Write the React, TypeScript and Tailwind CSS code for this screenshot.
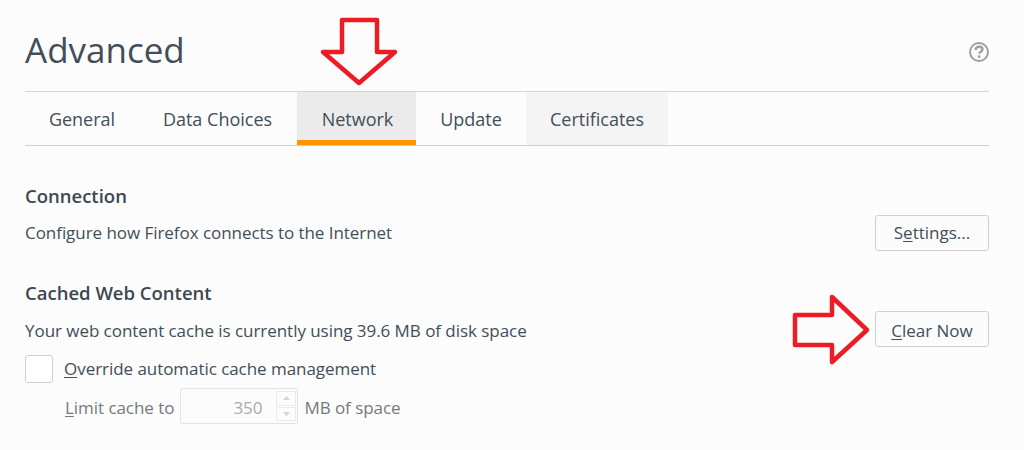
export default function App() {
  const tabs = [
    { label: "General", w: "w-[113px] pl-[1px]", cls: "" },
    { label: "Data Choices", w: "w-[159px]", cls: "" },
    { label: "Network", w: "w-[119px] pl-[2px]", cls: "bg-[#ebebeb] shadow-[inset_0_-5px_0_#ff9400]" },
    { label: "Update", w: "w-[110px]", cls: "" },
    { label: "Certificates", w: "w-[142px]", cls: "bg-[#f4f4f4]" },
  ];
  return (
    <div className="relative w-[1024px] h-[450px] overflow-hidden bg-[#fcfcfc] pl-[25px] pr-[35px] text-[#424e5a] font-['Open_Sans','Noto_Sans',sans-serif]">
      <div className="h-[92px] flex items-start justify-between border-b border-[#d5d5d5]">
        <h1 className="mt-[27px] text-[35px] leading-[46px] font-normal text-[#424e5a]">Advanced</h1>
        <svg className="mt-[42px]" width="20" height="20" viewBox="0 0 20 20">
          <circle cx="10" cy="10" r="9" fill="none" stroke="#a0a0a0" strokeWidth="2" />
          <path d="M6.6 8c0-2.1 1.4-3.3 3.5-3.3s3.4 1.2 3.4 2.8c0 2.3-3.2 2.2-3.2 4.3" fill="none" stroke="#a0a0a0" strokeWidth="2.4" />
          <rect x="8.9" y="13.4" width="2.5" height="2.5" fill="#a0a0a0" />
        </svg>
      </div>
      <div className="flex h-[54px] border-b border-[#cfcfcf]">
        {tabs.map((t) => (
          <div key={t.label} className={`${t.w} ${t.cls} flex items-center justify-center text-[18px] pt-[1px]`}>
            {t.label}
          </div>
        ))}
      </div>

      <section className="mt-[38px] flex items-start justify-between">
        <div>
          <h2 className="text-[18.5px] leading-[24px] font-semibold text-[#3c4752]">Connection</h2>
          <p className="mt-[13px] text-[17px] leading-[24px] tracking-[-0.05px]">Configure how Firefox connects to the Internet</p>
        </div>
        <button className="mt-[31px] w-[114px] h-[36px] rounded-[3px] border border-[#cfcfcf] bg-[#fbfbfb] text-[17px] text-[#424e5a]">
          S<span className="underline underline-offset-2">e</span>ttings...
        </button>
      </section>

      <section className="mt-[30px] flex items-start justify-between">
        <div>
          <h2 className="text-[18.5px] leading-[24px] font-semibold text-[#3c4752]">Cached Web Content</h2>
          <p className="mt-[14px] text-[17px] leading-[24px] tracking-[-0.05px]">Your web content cache is currently using 39.6 MB of disk space</p>
        </div>
        <button className="mt-[30px] w-[114px] h-[36px] pt-[3px] rounded-[3px] border border-[#cfcfcf] bg-[#fbfbfb] text-[17px] text-[#424e5a]">
          <span className="underline underline-offset-2">C</span>lear Now
        </button>
      </section>

      <div className="mt-[8px] flex items-center h-[28px]">
        <div className="w-[28px] h-[28px] rounded-[3px] border border-[#cfcfcf] bg-white" />
        <span className="ml-[11px] text-[17px] tracking-[-0.05px]">
          <span className="underline underline-offset-2">O</span>verride automatic cache management
        </span>
      </div>

      <div className="mt-[5px] ml-[40px] flex items-center h-[36px] text-[17px] tracking-[-0.05px] text-[#75797e]">
        <span className="pt-[4px]"><span className="underline underline-offset-2">L</span>imit cache to</span>
        <div className="ml-[6px] w-[118px] h-[36px] rounded-[2px] border border-[#e3e3e3] flex items-center justify-end">
          <span className="mr-[14px] pt-[4px] text-[#a9a9a9]">350</span>
          <div className="mr-[1px] w-[20px] h-[30px] flex flex-col gap-[1px]">
            <div className="flex-1 border border-[#ebebeb] flex items-center justify-center">
              <svg width="7" height="4" viewBox="0 0 7 4"><path d="M3.5 0L7 4H0z" fill="#d4d4d4" /></svg>
            </div>
            <div className="flex-1 border border-[#ebebeb] flex items-center justify-center">
              <svg width="7" height="4" viewBox="0 0 7 4"><path d="M0 0h7L3.5 4z" fill="#d4d4d4" /></svg>
            </div>
          </div>
        </div>
        <span className="ml-[6px] pt-[4px]">MB of space</span>
      </div>

      <svg className="absolute left-0 top-0 pointer-events-none" width="1024" height="450" viewBox="0 0 1024 450">
        <path d="M342 20H377V52H395L359 83L323 52H342Z" fill="none" stroke="#ed1c24" strokeWidth="4.5" strokeLinejoin="round" />
        <path d="M795 315H832V297L867 330L832 362V345H795Z" fill="none" stroke="#ed1c24" strokeWidth="4.5" strokeLinejoin="round" />
      </svg>
    </div>
  );
}
